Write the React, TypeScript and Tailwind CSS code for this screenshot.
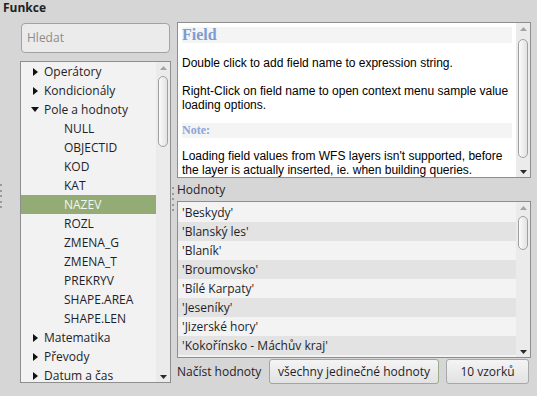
import React from "react";

interface TreeRow {
  label: string;
  kind: "closed" | "open" | "child";
  selected?: boolean;
}

const treeRows: TreeRow[] = [
  { label: "Operátory", kind: "closed" },
  { label: "Kondicionály", kind: "closed" },
  { label: "Pole a hodnoty", kind: "open" },
  { label: "NULL", kind: "child" },
  { label: "OBJECTID", kind: "child" },
  { label: "KOD", kind: "child" },
  { label: "KAT", kind: "child" },
  { label: "NAZEV", kind: "child", selected: true },
  { label: "ROZL", kind: "child" },
  { label: "ZMENA_G", kind: "child" },
  { label: "ZMENA_T", kind: "child" },
  { label: "PREKRYV", kind: "child" },
  { label: "SHAPE.AREA", kind: "child" },
  { label: "SHAPE.LEN", kind: "child" },
  { label: "Matematika", kind: "closed" },
  { label: "Převody", kind: "closed" },
  { label: "Datum a čas", kind: "closed" },
];

const values = [
  "'Beskydy'",
  "'Blanský les'",
  "'Blaník'",
  "'Broumovsko'",
  "'Bílé Karpaty'",
  "'Jeseníky'",
  "'Jizerské hory'",
  "'Kokořínsko - Máchův kraj'",
];

function Arrow({ dir, dim }: { dir: "up" | "down"; dim?: boolean }) {
  return (
    <div className="h-[11px] w-full flex items-center justify-center">
      <svg width="7" height="4" viewBox="0 0 7 4">
        {dir === "up" ? (
          <path d="M0 4 L3.5 0 L7 4 Z" fill={dim ? "#a3a3a3" : "#2a2a2a"} />
        ) : (
          <path d="M0 0 L7 0 L3.5 4 Z" fill={dim ? "#a3a3a3" : "#2a2a2a"} />
        )}
      </svg>
    </div>
  );
}

// thumb is the class string for margin-top + height of the scrollbar handle
function Scrollbar({ thumb }: { thumb: string }) {
  return (
    <div className="w-[14px] h-full shrink-0 bg-[#ebebeb] flex flex-col">
      <Arrow dir="up" dim />
      <div className="flex-1">
        <div
          className={`${thumb} mx-auto w-[10px] rounded-[5px] border border-[#a0a0a0] bg-gradient-to-r from-[#fbfbfb] to-[#e2e2e2]`}
        />
      </div>
      <Arrow dir="down" />
    </div>
  );
}

function TreeItem({ row }: { row: TreeRow }) {
  const sel = row.selected;
  return (
    <div
      className={`h-[19px] flex items-center text-[12px] ${
        sel ? "bg-[#93ab75] text-[#f4f6f0]" : "text-[#1e1e28]"
      } ${row.kind === "child" ? "pl-[43px]" : "pl-[11px]"}`}
    >
      {row.kind !== "child" && (
        <span className="w-[12px] flex items-center">
          {row.kind === "closed" ? (
            <svg width="5" height="8" viewBox="0 0 5 8" className="ml-[1px]">
              <path d="M0 0 L5 4 L0 8 Z" fill="#111" />
            </svg>
          ) : (
            <svg width="8" height="5" viewBox="0 0 8 5" className="-ml-[1px]">
              <path d="M0 0 L8 0 L4 5 Z" fill="#111" />
            </svg>
          )}
        </span>
      )}
      <span>{row.label}</span>
    </div>
  );
}

function Dots({ className }: { className: string }) {
  return (
    <div className={`absolute flex flex-col gap-[3.5px] ${className}`}>
      {[0, 1, 2, 3, 4].map((i) => (
        <div key={i} className="w-[2px] h-[2px] bg-[#9a9a9a]" />
      ))}
    </div>
  );
}

export default function App() {
  return (
    <div className="relative w-[537px] h-[396px] overflow-hidden bg-[#d6d6d6] font-['Open_Sans',sans-serif] text-[#1e1e28]">
      <div className="h-[22px] pl-[3px] text-[12px] font-bold leading-[16px] text-[#222]">
        Funkce
      </div>

      <div className="flex pl-[20px] gap-[6px]">
        {/* left: search + function tree */}
        <div className="w-[151px] flex flex-col">
          <div className="mt-[1px] ml-[1px] w-[149px] h-[30px] rounded-[4px] border border-[#a2a2a2] bg-[#ebebeb] flex items-center pl-[5px] text-[12px] text-[#8c8c8c]">
            Hledat
          </div>
          <div className="mt-[8px] h-[322px] border border-[#8e8e8e] bg-[#f2f2f2] flex overflow-hidden">
            <div className="flex-1 overflow-hidden">
              {treeRows.map((r) => (
                <TreeItem key={r.label} row={r} />
              ))}
            </div>
            <Scrollbar thumb="mt-[3px] h-[71px]" />
          </div>
        </div>

        {/* right: help, values */}
        <div className="w-[354px] flex flex-col">
          <div className="h-[156px] border border-[#8e8e8e] bg-white flex overflow-hidden">
            <div className="flex-1 pl-[4px] pr-[4px] pt-[4px] overflow-hidden font-['Liberation_Sans',Arial,sans-serif] text-[12px] leading-[14px] text-black">
              <div className="h-[16px] bg-[#f4f4f4] font-['Liberation_Serif',serif] font-bold text-[16px] leading-[16px] text-[#7c9dd0]">
                Field
              </div>
              <p className="mt-[13px]">Double click to add field name to expression string.</p>
              <p className="mt-[14px]">
                Right-Click on field name to open context menu sample value loading options.
              </p>
              <div className="mt-[11px] h-[15px] bg-[#f4f4f4] font-['Liberation_Serif',serif] font-bold text-[12px] leading-[15px] text-[#8aa6d6]">
                Note:
              </div>
              <p className="mt-[11px]">
                Loading field values from WFS layers isn't supported, before the layer is actually inserted, ie. when building queries.
              </p>
            </div>
            <Scrollbar thumb="mt-[5px] h-[119px]" />
          </div>

          <div className="h-[23px] pl-0 pt-[4px] text-[12px] leading-[16px]">Hodnoty</div>

          <div className="h-[157px] border border-[#8e8e8e] bg-[#f2f2f2] flex overflow-hidden">
            <div className="flex-1 pt-[1px] overflow-hidden">
              {values.map((v, i) => (
                <div
                  key={v}
                  className={`h-[19px] flex items-center pl-[4px] text-[12px] ${
                    i % 2 === 0 ? "bg-[#f3f3f3]" : "bg-[#e3e3e3]"
                  }`}
                >
                  {v}
                </div>
              ))}
            </div>
            <Scrollbar thumb="mt-[3px] h-[34px]" />
          </div>

          <div className="mt-[1px] h-[25px] flex items-center text-[12px]">
            <span className="w-[92px]">Načíst hodnoty</span>
            <button className="w-[170px] h-[25px] rounded-[3px] border border-[#98ad88] bg-gradient-to-b from-[#f4f4f4] to-[#e2e2e2] text-[12px]">
              všechny jedinečné hodnoty
            </button>
            <button className="ml-[7px] w-[83px] h-[25px] rounded-[3px] border border-[#a8a8a8] bg-gradient-to-b from-[#f4f4f4] to-[#e2e2e2] text-[12px]">
              10 vzorků
            </button>
          </div>
        </div>
      </div>

      <Dots className="left-0 top-[184px]" />
      <Dots className="left-[172px] top-[187px]" />
    </div>
  );
}
